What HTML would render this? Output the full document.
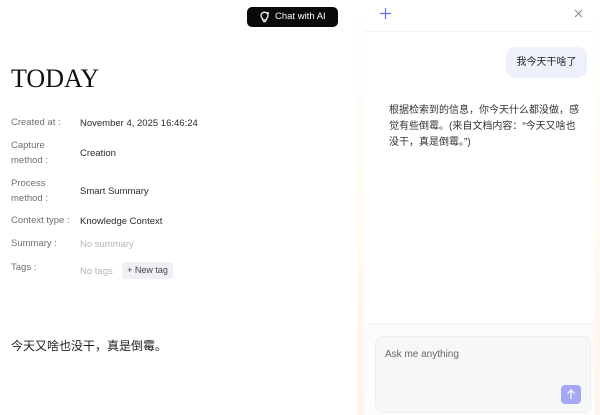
<!DOCTYPE html>
<html><head><meta charset="utf-8"><style>
*{margin:0;padding:0;box-sizing:border-box}
body{width:600px;height:415px;overflow:hidden;background:#fff;font-family:"Liberation Sans","Noto Sans CJK SC",sans-serif;position:relative}
.btn{position:absolute;left:247px;top:7px;width:91px;height:20px;background:#0a0a0a;border-radius:5px;color:#fff;font-size:9.5px;line-height:20px;padding-left:28px}
.btn svg{position:absolute;left:12px;top:4px}
h1{position:absolute;left:11px;top:64px;font-family:"Liberation Serif",serif;font-weight:400;font-size:26px;color:#111}
.l{position:absolute;left:11px;font-size:9.5px;color:#6f6f6f;line-height:14.5px}
.v{position:absolute;left:80px;font-size:9.5px;color:#2a2a2a}
.g{color:#b5b5b5}
.tag{position:absolute;left:122px;top:262px;width:51px;height:17px;background:#eef0f5;border-radius:3px;font-size:9px;color:#444;text-align:center;line-height:17px}
.cn{position:absolute;left:11px;top:337px;font-size:12px;color:#222}
.edge{position:absolute;left:357px;top:0;width:7px;height:415px;background:linear-gradient(#fff,#fffcf5 40%,#fff4ec)}
.edge2{position:absolute;left:595px;top:0;width:5px;height:415px;background:linear-gradient(#fff,#fffcf5 40%,#fff4ec)}
.panel{position:absolute;left:364px;top:0;width:231px;height:415px;background:#fff}
.hdr{position:absolute;left:0;top:0;width:231px;height:32px;border-bottom:1px solid #f3f3f3}
.bub{position:absolute;left:142px;top:47px;width:81px;height:31px;background:#eef0fb;border-radius:10px;font-size:10px;color:#222;line-height:31px;text-align:center}
.ans{position:absolute;left:25px;top:103px;width:196px;font-size:10px;color:#333;line-height:16px}
.foot{position:absolute;left:0;top:323px;width:231px;height:92px;background:#fcfcfc;border-top:1px solid #f4f4f4}
.inp{position:absolute;left:11px;top:12px;width:216px;height:77px;background:#f6f7f9;border:1px solid #eceef2;border-radius:8px}
.inp span{position:absolute;left:9px;top:12px;font-size:10px;color:#666}
.send{position:absolute;left:185px;top:48px;width:20px;height:19px;background:#a5a8f7;border-radius:4px}
</style></head><body>
<div class="btn"><svg width="12" height="12" viewBox="0 0 12 12" fill="none" stroke="#fff" stroke-width="1.2"><path d="M4 10.5h3M3.5 7.5A3.5 3.5 0 1 1 7.5 7.5V9h-4z"/><path d="M9 1v2M8 2h2" stroke-width="1"/></svg>Chat with AI</div>
<h1>TODAY</h1>
<div class="l" style="top:116px">Created at :</div><div class="v" style="top:118px">November 4, 2025 16:46:24</div>
<div class="l" style="top:139px">Capture<br>method :</div><div class="v" style="top:148px">Creation</div>
<div class="l" style="top:177px">Process<br>method :</div><div class="v" style="top:186px">Smart Summary</div>
<div class="l" style="top:214px">Context type :</div><div class="v" style="top:216px">Knowledge Context</div>
<div class="l" style="top:237px">Summary :</div><div class="v g" style="top:239px">No summary</div>
<div class="l" style="top:261px">Tags :</div><div class="v g" style="top:266px">No tags</div>
<div class="tag">+ New tag</div>
<div class="cn">今天又啥也没干，真是倒霉。</div>
<div class="edge"></div><div class="edge2"></div>
<div class="panel">
<div class="hdr">
<svg style="position:absolute;left:16px;top:8px" width="11" height="11" viewBox="0 0 11 11" stroke="#6b6cf0" stroke-width="1.2"><path d="M5.5 0v11M0 5.5h11"/></svg>
<svg style="position:absolute;left:210px;top:9px" width="9" height="9" viewBox="0 0 9 9" stroke="#888" stroke-width="1"><path d="M1 1l7 7M8 1l-7 7"/></svg>
</div>
<div class="bub">我今天干啥了</div>
<div class="ans">根据检索到的信息，你今天什么都没做，感觉有些倒霉。(来自文档内容：“今天又啥也没干，真是倒霉。”)</div>
<div class="foot"><div class="inp"><span>Ask me anything</span><div class="send"><svg style="position:absolute;left:5px;top:4px" width="10" height="11" viewBox="0 0 10 11" stroke="#fff" stroke-width="1.2" fill="none"><path d="M5 10V1M1.5 4.5L5 1l3.5 3.5"/></svg></div></div></div>
</div>
</body></html>
